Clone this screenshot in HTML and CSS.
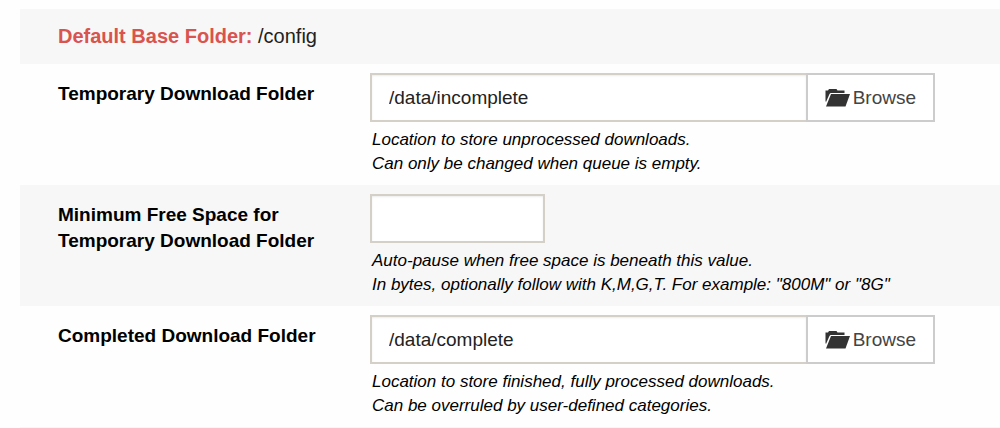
FILE: index.html
```
<!DOCTYPE html>
<html lang="en">
<head>
    <meta charset="UTF-8">
    <meta name="viewport" content="width=device-width, initial-scale=1.0">
    <title>Folders</title>
    <link rel="stylesheet" href="styles.css">
</head>
<body>
    <svg class="sprite" aria-hidden="true">
        <symbol id="folder-open" viewBox="0 0 25 18">
            <path d="M.5 12V1.500H3L4 0h7.500l1 1.500h7V4H5.500L4.500 5 1 13z"/>
            <path d="M6 5h19l-4.500 12.500H1z"/>
        </symbol>
    </svg>

    <form class="settings">
        <div class="base-folder">
            <strong>Default Base Folder:</strong> /config
        </div>

        <div class="row">
            <label class="name" for="download_dir">Temporary Download Folder</label>
            <div class="field">
                <div class="input-group">
                    <input type="text" id="download_dir" value="/data/incomplete">
                    <button type="button" class="browse-btn">
                        <svg class="icon" aria-hidden="true"><use href="#folder-open"/></svg>
                        Browse
                    </button>
                </div>
                <p class="desc">Location to store unprocessed downloads.<br>Can only be changed when queue is empty.</p>
            </div>
        </div>

        <div class="row alt">
            <label class="name" for="download_free">Minimum Free Space for Temporary Download Folder</label>
            <div class="field">
                <input type="text" class="small" id="download_free">
                <p class="desc">Auto-pause when free space is beneath this value.<br>In bytes, optionally follow with K,M,G,T. For example: "800M" or "8G"</p>
            </div>
        </div>

        <div class="row">
            <label class="name" for="complete_dir">Completed Download Folder</label>
            <div class="field">
                <div class="input-group">
                    <input type="text" id="complete_dir" value="/data/complete">
                    <button type="button" class="browse-btn">
                        <svg class="icon" aria-hidden="true"><use href="#folder-open"/></svg>
                        Browse
                    </button>
                </div>
                <p class="desc">Location to store finished, fully processed downloads.<br>Can be overruled by user-defined categories.</p>
            </div>
        </div>
    </form>
</body>
</html>
```

FILE: styles.css
```
* {
    margin: 0;
    padding: 0;
    box-sizing: border-box;
}

body {
    font-family: "Liberation Sans", Arial, sans-serif;
    font-size: 19px;
    color: #000;
    background: #fefefe;
}

.sprite {
    display: none;
}

.settings {
    margin: 9px 0 0 20px;
    border-bottom: 1px solid #f7f7f7;
}

.base-folder {
    padding: 14px 38px;
    font-size: 20px;
    line-height: 27px;
    color: #222;
    background: #f7f7f7;
}

.base-folder strong {
    color: #d9534f;
}

.row {
    display: grid;
    grid-template-columns: 274px minmax(0, 565px);
    column-gap: 38px;
    padding: 9px 38px;
}

.alt {
    background: #f7f7f7;
}

.name {
    padding-top: 8px;
    font-weight: bold;
    line-height: 26px;
}

.input-group {
    display: flex;
}

input {
    flex: 1;
    min-width: 0;
    height: 49px;
    padding: 0 17px;
    border: 2px solid #d4d0c8;
    font: inherit;
    color: #222;
    background: #fff;
    box-shadow: inset 0 1px 2px rgba(0, 0, 0, 0.08);
}

.small {
    display: block;
    width: 175px;
}

.browse-btn {
    display: flex;
    align-items: center;
    gap: 3px;
    margin-left: -2px;
    padding: 0 17px;
    border: 2px solid #ccc;
    font: inherit;
    color: #444;
    background: #fff;
    cursor: pointer;
}

.browse-btn:hover {
    background: #f7f7f7;
}

.icon {
    width: 25px;
    height: 18px;
    fill: #333;
}

.desc {
    padding: 6px 0 0 2px;
    font-size: 17px;
    font-style: italic;
    line-height: 24px;
}
```
